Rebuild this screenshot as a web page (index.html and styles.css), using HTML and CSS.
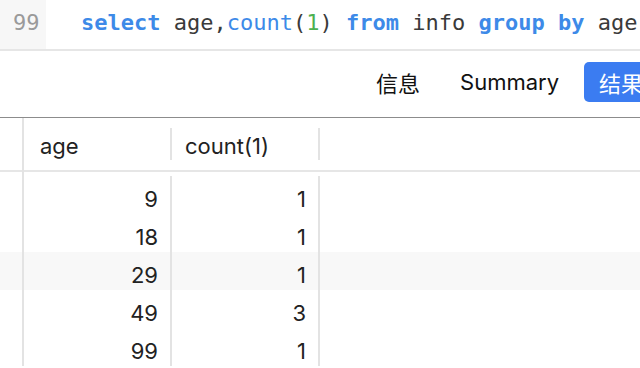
FILE: index.html
```html
<!DOCTYPE html>
<html lang="zh">
<head>
<meta charset="utf-8">
<title>Query</title>
<link rel="stylesheet" href="styles.css">
</head>
<body>
<div class="editor">
  <div class="gutter">99</div>
  <div class="code"><span class="kw">select</span> age,<span class="fn">count</span>(<span class="num">1</span>) <span class="kw">from</span> info <span class="kw">group</span> <span class="kw">by</span> age</div>
</div>
<div class="tabs">
  <button class="tab">信息</button>
  <button class="tab">Summary</button>
  <button class="tab active">结果</button>
</div>
<div class="grid">
  <div class="row head">
    <div class="cell idx"></div>
    <div class="cell c1">age</div>
    <div class="cell c2">count(1)</div>
    <div class="cell rest"></div>
  </div>
  <div class="body">
    <div class="row"><div class="cell idx"></div><div class="cell c1 n">9</div><div class="cell c2 n">1</div><div class="cell rest"></div></div>
    <div class="row"><div class="cell idx"></div><div class="cell c1 n">18</div><div class="cell c2 n">1</div><div class="cell rest"></div></div>
    <div class="row alt"><div class="cell idx"></div><div class="cell c1 n">29</div><div class="cell c2 n">1</div><div class="cell rest"></div></div>
    <div class="row"><div class="cell idx"></div><div class="cell c1 n">49</div><div class="cell c2 n">3</div><div class="cell rest"></div></div>
    <div class="row"><div class="cell idx"></div><div class="cell c1 n">99</div><div class="cell c2 n">1</div><div class="cell rest"></div></div>
  </div>
</div>
</body>
</html>
```
FILE: styles.css
```css
html, body {
  margin: 0;
  padding: 0;
  background: #ffffff;
  overflow: hidden;
}
body {
  width: 640px;
  height: 368px;
  font-family: Inter, "Noto Sans CJK SC", sans-serif;
  color: #222;
}
.editor {
  display: flex;
  height: 49px;
  border-bottom: 2px solid #e6e6e6;
  font-family: "DejaVu Sans Mono", monospace;
  font-size: 22px;
  white-space: nowrap;
}
.gutter {
  width: 46px;
  flex: none;
  background: #f7f7f7;
  color: #9a9a9a;
  box-sizing: border-box;
  padding-left: 13px;
  line-height: 45px;
}
.code {
  padding-left: 35px;
  line-height: 45px;
  color: #3a3a3a;
}
.kw { color: #3d8ae8; font-weight: bold; }
.fn { color: #3d8ae8; }
.num { color: #4cb050; }

.tabs {
  display: flex;
  gap: 10px;
  height: 67px;
  box-sizing: border-box;
  padding: 11px 0 0 361px;
  align-items: flex-start;
  border-bottom: 1px solid #8c8c8c;
  white-space: nowrap;
}
.tab {
  font-family: Inter, "Noto Sans CJK SC", sans-serif;
  font-size: 22px;
  color: #111;
  background: none;
  border: none;
  padding: 0 15px;
  height: 40px;
  border-radius: 5px;
  flex: none;
}
.tab.active {
  background: #3b7cf1;
  color: #fff;
}

.grid {
  font-size: 22px;
}
.row {
  display: flex;
  height: 38px;
}
.row.head {
  height: 52px;
  border-bottom: 2px solid #e6e6e6;
}
.body {
  padding-top: 4px;
}
.body .row.alt {
  background: #f8f8f8;
}
.cell {
  box-sizing: border-box;
  display: flex;
  align-items: center;
  flex: none;
  position: relative;
}
.head .cell {
  padding-top: 4px;
}
.body .cell {
  padding-top: 7px;
}
.idx {
  width: 24px;
  border-right: 2px solid #e3e3e3;
}
.head .idx {
  height: 54px;
  margin-bottom: -2px;
}
.body .idx {
  height: 42px;
  margin-top: -4px;
}
.body .row:not(:first-child) .idx {
  height: 38px;
  margin-top: 0;
}
.c1 { width: 148px; }
.c2 { width: 148px; }
.rest { flex: 1; }
.head .c1 { padding-left: 16px; }
.head .c2 { padding-left: 13px; }
.head .c1::after,
.head .c2::after {
  content: "";
  position: absolute;
  right: 0;
  top: 10px;
  bottom: 10px;
  width: 2px;
  background: #e3e3e3;
}
.body .c1, .body .c2 {
  border-right: 2px solid #e3e3e3;
}
.n {
  justify-content: flex-end;
  padding-right: 12px;
}
```
